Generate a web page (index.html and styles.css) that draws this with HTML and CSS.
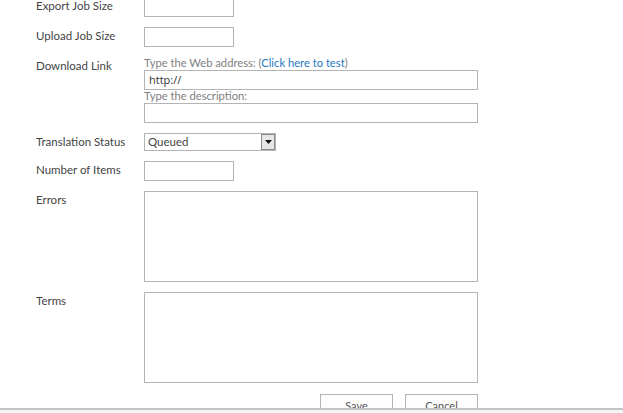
FILE: index.html
```html
<!DOCTYPE html>
<html>
<head>
<meta charset="utf-8">
<link rel="stylesheet" href="styles.css">
</head>
<body>
<div class="page">
  <div class="form">
    <div class="row">
      <div class="label">Export Job Size</div>
      <div class="field"><div class="input short"></div></div>
    </div>
    <div class="row">
      <div class="label">Upload Job Size</div>
      <div class="field"><div class="input short"></div></div>
    </div>
    <div class="row">
      <div class="label">Download Link</div>
      <div class="field">
        <div class="hint">Type the Web address: (<a class="link" href="#">Click here to test</a>)</div>
        <div class="input long"><span class="value">http://</span></div>
        <div class="hint">Type the description:</div>
        <div class="input long"></div>
      </div>
    </div>
    <div class="row">
      <div class="label">Translation Status</div>
      <div class="field">
        <div class="select">
          <span class="select-text">Queued</span>
          <span class="select-btn"><svg width="7" height="4" viewBox="0 0 7 4"><path d="M0 0H7L3.5 4Z" fill="#111"/></svg></span>
        </div>
      </div>
    </div>
    <div class="row">
      <div class="label">Number of Items</div>
      <div class="field"><div class="input short"></div></div>
    </div>
    <div class="row">
      <div class="label">Errors</div>
      <div class="field"><div class="textarea"></div></div>
    </div>
    <div class="row">
      <div class="label">Terms</div>
      <div class="field"><div class="textarea"></div></div>
    </div>
    <div class="buttons">
      <button class="btn">Save</button>
      <button class="btn">Cancel</button>
    </div>
  </div>
</div>
<div class="footer"></div>
</body>
</html>
```
FILE: styles.css
```css
html, body {
  margin: 0;
  padding: 0;
  background: #ffffff;
}
body {
  font-family: Lato, "Open Sans", sans-serif;
  font-size: 11.5px;
  color: #444444;
}
.page {
  height: 408px;
  overflow: hidden;
}
.form {
  margin-top: -3px;
  display: flex;
  flex-direction: column;
  gap: 10px;
}
.row {
  display: grid;
  grid-template-columns: 108px 334px;
  padding-left: 36px;
}
.label {
  padding-top: 2px;
  line-height: 14px;
  color: #444444;
}
.field {
  display: flex;
  flex-direction: column;
}
.input {
  box-sizing: border-box;
  height: 20px;
  border: 1px solid #b4b4b4;
  background: #fff;
}
.input.short { width: 90px; }
.input.long { width: 334px; }
.value {
  display: block;
  padding-left: 4px;
  line-height: 17px;
  color: #333;
  font-family: "Open Sans", Lato, sans-serif;
  font-size: 11px;
}
.hint {
  height: 13px;
  line-height: 13px;
  font-size: 11.2px;
  color: #808080;
  margin-top: -1px;
  margin-bottom: 1px;
}
.link {
  color: #2677bd;
  text-decoration: none;
}
.select {
  box-sizing: border-box;
  width: 132px;
  height: 18px;
  border: 1px solid #b4b4b4;
  display: flex;
  align-items: center;
  justify-content: space-between;
  padding-left: 3px;
}
.select-text {
  color: #444;
  line-height: 16px;
}
.select-btn {
  box-sizing: border-box;
  width: 14px;
  height: 16px;
  background: #e6e6e6;
  border: 1px solid #8c8c8c;
  display: flex;
  align-items: center;
  justify-content: center;
}
.textarea {
  box-sizing: border-box;
  width: 334px;
  height: 91px;
  border: 1px solid #b4b4b4;
}
.buttons {
  display: flex;
  justify-content: flex-end;
  gap: 12px;
  width: 478px;
  margin-top: 1px;
}
.btn {
  box-sizing: border-box;
  width: 73px;
  height: 24px;
  border: 1px solid #b4b4b4;
  background: #fdfdfd;
  font-family: Lato, "Open Sans", sans-serif;
  font-size: 11px;
  color: #555;
  padding: 5px 0 0 0;
  line-height: 12px;
  display: flex;
  justify-content: center;
  align-items: flex-start;
}
.footer {
  height: 5px;
  border-top: 2px solid #c4c4c4;
  background: #f4f4f4;
  box-sizing: border-box;
}
```
